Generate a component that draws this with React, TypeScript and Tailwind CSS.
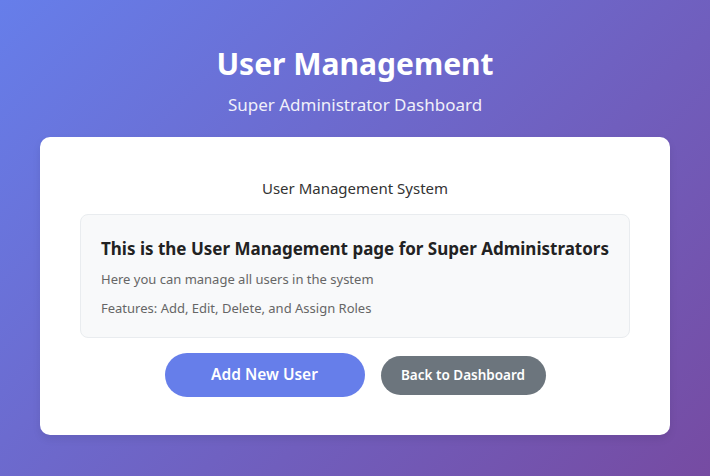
export default function App() {
  return (
    <div className="min-h-screen w-full bg-[linear-gradient(135deg,#667eea_0%,#764ba2_100%)] px-10 pt-[44px] pb-10 font-['Noto_Sans','Open_Sans',sans-serif] text-[#333]">
      <header className="text-center text-white">
        <h1 className="text-[30px] font-bold leading-[40px]">User Management</h1>
        <p className="mt-[9px] text-[17px] leading-[24px] opacity-90">Super Administrator Dashboard</p>
      </header>

      <div className="mt-[20px] rounded-[10px] bg-white px-10 pt-10 pb-[38px] shadow-[0_4px_8px_rgba(0,0,0,0.08)]">
        <p className="text-center text-[15px] leading-[22px] text-[#333]">User Management System</p>

        <div className="mt-[15px] rounded-[8px] border border-[#e9ecef] bg-[#f8f9fa] px-5 pt-[21px] pb-[19px]">
          <h3 className="whitespace-nowrap text-[17px] font-bold leading-[26px] text-[#222]">
            This is the User Management page for Super Administrators
          </h3>
          <p className="mt-[7px] text-[13px] leading-[20px] text-[#666]">Here you can manage all users in the system</p>
          <p className="mt-[9px] text-[13px] leading-[20px] text-[#666]">Features: Add, Edit, Delete, and Assign Roles</p>
        </div>

        <div className="mt-[15px] flex items-center justify-center gap-4">
          <button className="h-[44px] w-[200px] rounded-full bg-[#667eea] text-[15.5px] font-semibold text-white">
            Add New User
          </button>
          <button className="h-[39px] w-[165px] rounded-full bg-[#6c757d] text-[13.5px] font-semibold text-white">
            Back to Dashboard
          </button>
        </div>
      </div>
    </div>
  );
}
